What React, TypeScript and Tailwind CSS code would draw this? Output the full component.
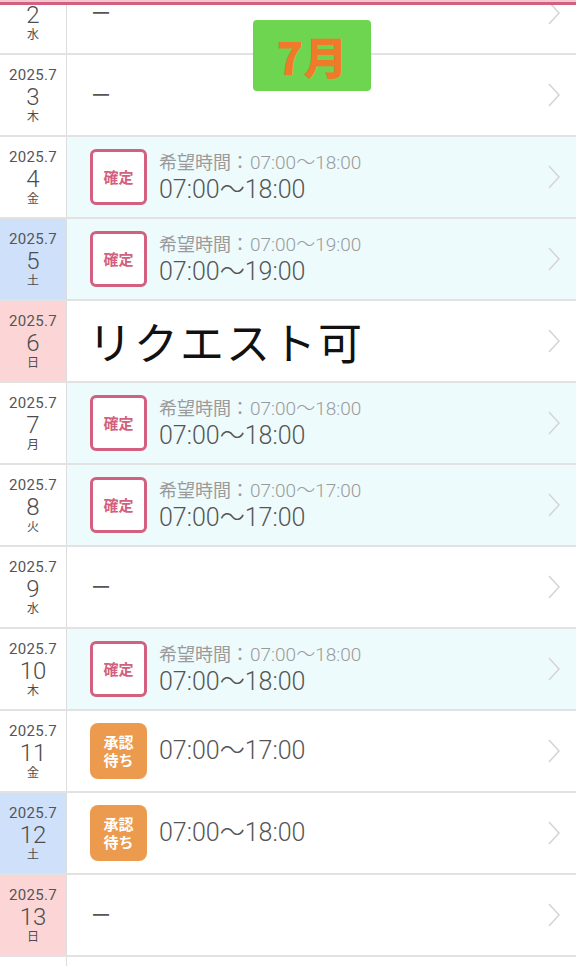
import React from "react";

type Row = {
  year?: string;
  day: string;
  wd: string;
  kind: "sat" | "sun" | "normal";
  status: "none" | "confirmed" | "pending" | "request";
  wish?: string;
  time?: string;
};

const rows: Row[] = [
  { year: "2025.7", day: "2", wd: "水", kind: "normal", status: "none" },
  { year: "2025.7", day: "3", wd: "木", kind: "normal", status: "none" },
  { year: "2025.7", day: "4", wd: "金", kind: "normal", status: "confirmed", wish: "07:00〜18:00", time: "07:00〜18:00" },
  { year: "2025.7", day: "5", wd: "土", kind: "sat", status: "confirmed", wish: "07:00〜19:00", time: "07:00〜19:00" },
  { year: "2025.7", day: "6", wd: "日", kind: "sun", status: "request" },
  { year: "2025.7", day: "7", wd: "月", kind: "normal", status: "confirmed", wish: "07:00〜18:00", time: "07:00〜18:00" },
  { year: "2025.7", day: "8", wd: "火", kind: "normal", status: "confirmed", wish: "07:00〜17:00", time: "07:00〜17:00" },
  { year: "2025.7", day: "9", wd: "水", kind: "normal", status: "none" },
  { year: "2025.7", day: "10", wd: "木", kind: "normal", status: "confirmed", wish: "07:00〜18:00", time: "07:00〜18:00" },
  { year: "2025.7", day: "11", wd: "金", kind: "normal", status: "pending", time: "07:00〜17:00" },
  { year: "2025.7", day: "12", wd: "土", kind: "sat", status: "pending", time: "07:00〜18:00" },
  { year: "2025.7", day: "13", wd: "日", kind: "sun", status: "none" },
  { year: "2025.7", day: "14", wd: "月", kind: "normal", status: "none" },
];

const JP = "font-['Noto_Sans_CJK_JP','Noto_Sans',sans-serif]";
const NUM = "font-['Roboto','Noto_Sans_CJK_JP',sans-serif]";

function Chevron() {
  return (
    <svg width="16" height="26" viewBox="0 0 16 26" className="shrink-0">
      <path d="M3 2 L13 13 L3 24" fill="none" stroke="#d4d4d4" strokeWidth="1.5" />
    </svg>
  );
}

function DateCell({ r }: { r: Row }) {
  const bg = r.kind === "sat" ? "bg-[#cfe0fb]" : r.kind === "sun" ? "bg-[#fcd6d6]" : "bg-white";
  return (
    <div className={`w-[67px] shrink-0 border-r border-[#dddddd] flex flex-col items-center justify-center ${bg} text-[#4d4d4d]`}>
      <div className={`${NUM} text-[15px] leading-[16px] tracking-[0.3px] text-[#555555]`}>{r.year}</div>
      <div className={`${NUM} text-[24px] leading-[24px] font-light mt-[2px]`}>{r.day}</div>
      <div className={`${JP} text-[12px] leading-[14px]`}>{r.wd}</div>
    </div>
  );
}

function Content({ r }: { r: Row }) {
  if (r.status === "confirmed") {
    return (
      <div className="flex items-center">
        <div className={`${JP} w-[57px] h-[56px] border-[3px] border-[#d2607e] rounded-[6px] flex items-center justify-center text-[#d2607e] text-[15px] font-bold bg-white`}>
          確定
        </div>
        <div className="ml-[12px] flex flex-col">
          <div className="flex items-baseline text-[#9a9a9a] leading-[22px]">
            <span className={`${JP} text-[18px]`}>希望時間：</span>
            <span className={`${NUM} text-[19px] font-light ml-[1px]`}>{r.wish}</span>
          </div>
          <div className={`${NUM} text-[25px] leading-[30px] text-[#555555] font-light mt-[1px]`}>{r.time}</div>
        </div>
      </div>
    );
  }
  if (r.status === "pending") {
    return (
      <div className="flex items-center">
        <div className={`${JP} w-[57px] h-[56px] rounded-[8px] bg-[#eb9a4e] flex flex-col items-center justify-center text-white text-[15px] font-bold leading-[18px]`}>
          <span>承認</span>
          <span>待ち</span>
        </div>
        <div className={`${NUM} ml-[12px] text-[25px] leading-[30px] text-[#555555] font-light`}>{r.time}</div>
      </div>
    );
  }
  if (r.status === "request") {
    return <div className={`${JP} text-[44px] leading-[52px] text-[#111111] -ml-[2px] tracking-[2px]`}>リクエスト可</div>;
  }
  return <div className={`${JP} text-[20px] text-[#555555] ml-[1px]`}>ー</div>;
}

export default function App() {
  return (
    <div className={`${JP} relative w-[576px] h-[966px] overflow-hidden bg-white`}>
      <div className="-mt-[27px] flex flex-col">
        {rows.map((r, i) => (
          <div key={i} className="h-[82px] flex border-b-2 border-[#e2e2e2]">
            <DateCell r={r} />
            <div
              className={`flex-1 flex items-center justify-between pl-[23px] pr-[14px] ${
                r.status === "confirmed" ? "bg-[#eefbfd]" : "bg-white"
              }`}
            >
              <Content r={r} />
              <Chevron />
            </div>
          </div>
        ))}
      </div>
      <div className="absolute left-0 top-0 w-full h-[2px] bg-[#f3c6d2]" />
      <div className="absolute left-0 top-[2px] w-full h-[3px] bg-[#d2607e]" />
      <div className="absolute left-[253px] top-[20px] w-[118px] h-[71px] rounded-[4px] bg-[#6dd54f] flex items-center justify-center">
        <span className={`${JP} text-[#f07a2a] text-[44px] font-black leading-none`}>7月</span>
      </div>
    </div>
  );
}
